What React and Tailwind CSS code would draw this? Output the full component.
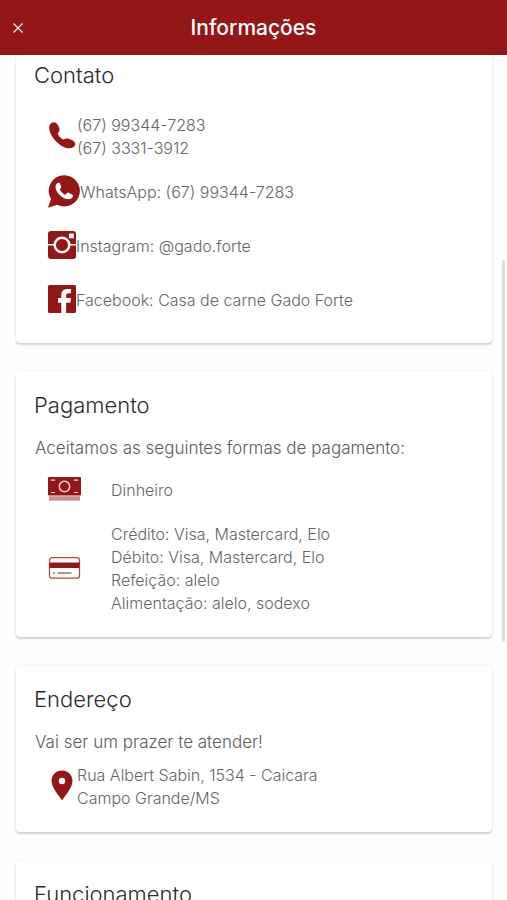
import React from "react";

function PhoneIcon() {
  return (
    <svg viewBox="0 0 28 30" className="mr-px h-[30px] w-7 shrink-0 fill-[#941717]" aria-hidden="true">
      <path d="M5.400.3C2.900.7 1 3.200 1.200 6.200c.3 4.800 3.600 9.900 7.500 13.700 3.900 3.800 8.600 6.500 12.800 6.400 3-.1 5.300-1.500 5.700-3.800.3-1.900-1.100-3.300-3.300-4.400-2-1-4.300-1.800-6.100-1.500-1.200.2-1.800.9-2.700.8-1.200-.2-2.600-1.500-3.700-2.800-1-1.300-1.700-2.500-1.300-3.500.4-.9 1.300-1.300 1.400-2.900.1-2-.9-4.300-2.200-6C8 .8 6.900.1 5.400.3z" />
    </svg>
  );
}

function WhatsAppIcon() {
  return (
    <svg viewBox="0 0 32 35" className="h-[35px] w-8 shrink-0" aria-hidden="true">
      <path fill="#941717" d="M16.300.3a15.600 15.600 0 1 1-7.100 29.500L0 32.700l3-8.700A15.600 15.600 0 0 1 16.300.3z" />
      <path fill="#fff" d="M11 7.800c-1.900-.1-3.700 1.700-3.500 4.400.3 5.500 7.400 12 13.100 12 2.400 0 4.400-1.300 4.400-3.200 0-.6-.3-1-.8-1.300l-3.500-1.900c-.7-.4-1.300-.2-1.700.3l-1 1.200c-.4.400-.8.400-1.300.2-1.900-.8-3.700-2.600-4.700-4.400-.3-.5-.2-.9.200-1.300l.8-.9c.4-.5.400-.9.200-1.500l-1.200-2.900c-.2-.5-.5-.7-1-.7z" />
    </svg>
  );
}

function InstagramIcon() {
  return (
    <svg viewBox="0 0 28 30" className="h-[30px] w-7 shrink-0" aria-hidden="true">
      <rect width="28" height="28" rx="3" fill="#941717" />
      <path stroke="#fff" strokeWidth="1.600" d="M0 13.800h6M22 13.800h6" />
      <circle cx="14" cy="14" r="7.300" fill="none" stroke="#fff" strokeWidth="2.400" />
      <rect x="21" y="2.500" width="4.800" height="4.800" rx=".5" fill="#fff" />
    </svg>
  );
}

function FacebookIcon() {
  return (
    <svg viewBox="0 0 28 30" className="h-[30px] w-7 shrink-0" aria-hidden="true">
      <rect width="28" height="28" rx="1.500" fill="#941717" />
      <path fill="#fff" d="M13.300 28V17.700H10v-4.600h3.300v-2.900c0-4.100 2.300-6.300 6.100-6.300 1.400 0 2.800.1 3.600.2v4.200h-2.400c-1.900 0-2.500.9-2.500 2.300v2.500H23l-.7 4.600h-4.200V28z" />
    </svg>
  );
}

function CashIcon() {
  return (
    <svg viewBox="0 0 33 26" className="h-[26px] w-[33px] shrink-0" aria-hidden="true">
      <rect width="33" height="18.500" rx="1" fill="#941717" />
      <path fill="#c98080" d="M1 19.300h31v4.200H1z" />
      <path stroke="#e6c2c2" strokeWidth=".6" d="M1 21.200h31" />
      <circle cx="16.500" cy="9.500" r="5.200" fill="none" stroke="#f3dada" strokeWidth="1.500" />
      <path stroke="#f3dada" strokeWidth="1.200" d="M3 3.200h4M26 3.200h4M3 15.500h4M26 15.500h4" />
    </svg>
  );
}

function CardIcon() {
  return (
    <svg viewBox="0 0 33 24" className="h-6 w-[33px] shrink-0" aria-hidden="true">
      <rect x="1.500" y=".7" width="30" height="20.500" rx="2.500" fill="#fff" stroke="#b04a4a" strokeWidth="1.300" />
      <path fill="#941717" d="M1.500 5.500h30v5.500h-30z" />
      <path stroke="#941717" strokeWidth="1.200" d="M5 16h2M9.500 16h14" />
    </svg>
  );
}

function PinIcon() {
  return (
    <svg viewBox="0 0 22 34" className="ml-[3px] mr-1 h-[34px] w-[22px] shrink-0" aria-hidden="true">
      <path fill="#941717" fillRule="evenodd" d="M11 .5C5 .5.500 5 .5 10.800.5 18.100 8 25.500 11 30.500c3-5 10.500-12.400 10.500-19.700C21.500 5 17 .5 11 .5zm0 7.300a3.200 3.200 0 1 1 0 6.400 3.200 3.200 0 0 1 0-6.400z" />
    </svg>
  );
}

function Card({ title, first, children }) {
  return (
    <section
      className={
        "rounded-sm bg-white pl-[18px] pr-4 shadow-[0_2px_2px_rgba(0,0,0,0.16),0_0_2px_rgba(0,0,0,0.1)] " +
        (first ? "pb-4 pt-1.5" : "pb-[22px] pt-5")
      }
    >
      <h2 className="text-[22px] leading-7 text-[#2b2b2b]">{title}</h2>
      {children}
    </section>
  );
}

export default function App() {
  return (
    <div className="relative flex h-screen flex-col overflow-hidden bg-[#fefefe] font-['Inter','Noto_Sans',sans-serif] font-light text-[#666666]">
      <header className="z-10 grid h-[55px] shrink-0 grid-cols-[36px_1fr_36px] items-center bg-[#941717] text-white">
        <button type="button" aria-label="Fechar" className="flex h-9 items-center justify-center">
          <svg viewBox="0 0 10 10" className="h-2.5 w-2.5" aria-hidden="true">
            <path d="M.5.5l9 9M9.500.5l-9 9" stroke="#fff" strokeWidth="1.100" />
          </svg>
        </button>
        <h1 className="text-center text-[21px] font-medium leading-7">Informações</h1>
      </header>

      <main className="flex flex-col gap-7 pl-4 pr-[15px] text-base leading-[23px]">
        <Card title="Contato" first>
          <ul className="mt-5 pl-3.5">
            <li className="flex h-14 items-center">
              <PhoneIcon />
              <p>
                (67) 99344-7283
                <br />
                (67) 3331-3912
              </p>
            </li>
            <li className="flex h-[54px] items-center">
              <WhatsAppIcon />
              <p>WhatsApp: (67) 99344-7283</p>
            </li>
            <li className="flex h-[54px] items-center">
              <InstagramIcon />
              <p>Instagram: @gado.forte</p>
            </li>
            <li className="flex h-[54px] items-center">
              <FacebookIcon />
              <p>Facebook: Casa de carne Gado Forte</p>
            </li>
          </ul>
        </Card>

        <Card title="Pagamento">
          <p className="mt-[18px] pl-px text-[17px] text-[#5c5c5c]">Aceitamos as seguintes formas de pagamento:</p>
          <ul className="mt-[17px] flex flex-col gap-5 pl-3.5">
            <li className="flex items-center gap-[30px]">
              <CashIcon />
              <p>Dinheiro</p>
            </li>
            <li className="flex items-center gap-[30px]">
              <CardIcon />
              <p>
                Crédito: Visa, Mastercard, Elo
                <br />
                Débito: Visa, Mastercard, Elo
                <br />
                Refeição: alelo
                <br />
                Alimentação: alelo, sodexo
              </p>
            </li>
          </ul>
        </Card>

        <Card title="Endereço">
          <p className="mt-[18px] pl-px text-[17px] text-[#5c5c5c]">Vai ser um prazer te atender!</p>
          <address className="mt-2.5 flex items-center pl-3.5 not-italic">
            <PinIcon />
            <p>
              Rua Albert Sabin, 1534 - Caicara
              <br />
              Campo Grande/MS
            </p>
          </address>
        </Card>

        <Card title="Funcionamento" />
      </main>

      <div className="absolute right-0.5 top-[260px] h-[382px] w-[3px] rounded-full bg-[#dedede]" />
    </div>
  );
}
